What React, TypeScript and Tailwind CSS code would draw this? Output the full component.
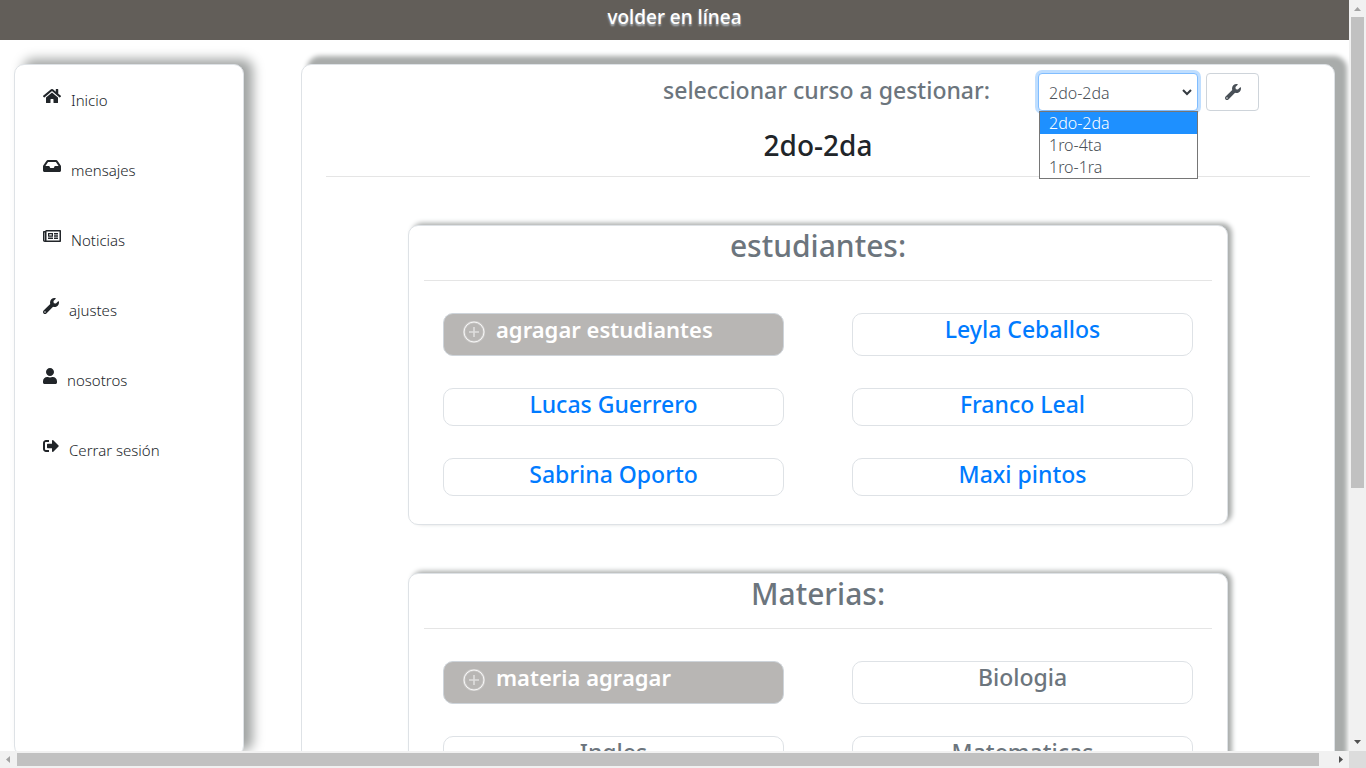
import React, { useState } from "react";
import { FaHome, FaInbox, FaRegNewspaper, FaSignOutAlt, FaUser, FaWrench } from "react-icons/fa";

const cursos = ["2do-2da", "1ro-4ta", "1ro-1ra"];

const menu = [
  { texto: "Inicio", icono: <FaHome className="h-4 w-[18px]" /> },
  { texto: "mensajes", icono: <FaInbox className="h-4 w-[18px]" /> },
  { texto: "Noticias", icono: <FaRegNewspaper className="h-4 w-[18px]" /> },
  { texto: "ajustes", icono: <FaWrench className="h-4 w-4" /> },
  { texto: "nosotros", icono: <FaUser className="h-4 w-3.5" /> },
  { texto: "Cerrar sesión", icono: <FaSignOutAlt className="h-4 w-4" /> },
];

function PlusCircle() {
  return (
    <svg className="h-[22px] w-[22px] shrink-0" viewBox="0 0 22 22" fill="none" stroke="#fff" aria-hidden="true">
      <circle cx="11" cy="11" r="10" strokeWidth="2.6" opacity="0.25" />
      <circle cx="11" cy="11" r="10" strokeWidth="1" opacity="0.85" />
      <path d="M11 6v10M6 11h10" strokeWidth="1.6" opacity="0.55" />
    </svg>
  );
}

function Tarjeta({ titulo, agregar, items, enlaces }: { titulo: string; agregar: string; items: string[]; enlaces?: boolean }) {
  return (
    <section className="mx-auto mt-12 w-10/12 rounded-[10px] border border-[#dee2e6] bg-white px-[15px] pb-7 shadow-[4px_-2px_5px_#a9acab]">
      <h2 className="pt-0.5 text-center text-[30px] leading-9 font-medium text-[#6c757d]">{titulo}</h2>
      <hr className="mt-4 border-black/10" />
      <div className="mt-8 grid grid-cols-2 gap-x-[68px] gap-y-8 px-[19px] text-[23px] leading-7 font-medium">
        <button type="button" className="flex items-start rounded-[10px] border border-[#ced4da] bg-[#b8b6b4] px-[19px] pt-px pb-3 text-[22px] font-semibold text-white">
          <span className="flex h-7 items-center gap-[11px]">
            <span className="pt-1.5"><PlusCircle /></span>
            {agregar}
          </span>
        </button>
        {items.map((item) => (
          <div key={item} className="rounded-[10px] border border-[#dee2e6] pt-px pb-[7px] text-center text-[#6c757d]">
            {enlaces ? <a href="#" className="text-[#007bff]">{item}</a> : item}
          </div>
        ))}
      </div>
    </section>
  );
}

function Flecha({ d, color }: { d: string; color: string }) {
  return (
    <svg className="h-[17px] w-[17px] shrink-0" viewBox="0 0 17 17" fill={color} aria-hidden="true">
      <path d={d} />
    </svg>
  );
}

export default function App() {
  const [curso, setCurso] = useState(cursos[0]);
  return (
    <div className="grid h-screen grid-cols-[minmax(0,1fr)_17px] grid-rows-[minmax(0,1fr)_17px] bg-white font-['Noto_Sans','Open_Sans',sans-serif] text-[#212529]">
      <div className="overflow-hidden">
        <header className="h-10 bg-[#625e59] text-center">
          <h1 className="text-[19px] leading-[34px] font-medium text-white [text-shadow:0_2px_2px_#b5bdc4]">volder en línea</h1>
        </header>

        <div className="mt-6 flex items-start px-3.5">
          <nav className="h-[692px] w-[230px] shrink-0 rounded-[10px] border border-[#dee2e6] bg-white px-7 pt-[23px] shadow-[9px_-5px_12px_#a1a4a3]">
            <ul className="flex flex-col gap-[46px]">
              {menu.map(({ texto, icono }) => (
                <li key={texto}>
                  <a href="#" className="flex items-start gap-2.5">
                    {icono}
                    <span className="text-[15px] leading-6 font-light">{texto}</span>
                  </a>
                </li>
              ))}
            </ul>
          </nav>

          <main className="ml-[57px] flex-1 rounded-[10px] border border-[#dee2e6] bg-white px-6 pt-2 pb-12 shadow-[9px_-5px_5px_3px_#a9acab]">
            <div className="flex justify-end pr-[51px]">
              <label htmlFor="curso" className="mr-12 text-[23px] leading-[34px] font-medium text-[#6c757d]">
                seleccionar curso a gestionar:
              </label>
              <div className="relative mr-2 w-40">
                <select
                  id="curso"
                  value={curso}
                  onChange={(e) => setCurso(e.target.value)}
                  className="h-[38px] w-full appearance-none rounded border border-[#80bdff] bg-white pt-0.5 pl-2.5 text-base font-light text-[#495057] shadow-[0_0_0_3px_#bfdeff] outline-none"
                >
                  {cursos.map((c) => (
                    <option key={c}>{c}</option>
                  ))}
                </select>
                <svg className="pointer-events-none absolute top-4 right-1.5 h-2 w-2.5" viewBox="0 0 10 8" fill="none" stroke="#343a40" strokeWidth="2" aria-hidden="true">
                  <path d="M1 1l4 4 4-4" />
                </svg>
                <ul role="listbox" aria-label="cursos" className="absolute top-[38px] right-0 left-px z-10 border border-[#767676] bg-white text-base leading-[22px] font-light text-[#495057]">
                  {cursos.map((c) => (
                    <li
                      key={c}
                      role="option"
                      aria-selected={c === curso}
                      onClick={() => setCurso(c)}
                      className={c === curso ? "bg-[#1e90ff] pl-[9px] text-white" : "pl-[9px]"}
                    >
                      {c}
                    </li>
                  ))}
                </ul>
              </div>
              <button type="button" aria-label="gestionar" className="flex h-[38px] w-[53px] items-center justify-center rounded border border-[#ced4da] text-[#495057]">
                <FaWrench className="h-4 w-4" />
              </button>
            </div>
            <h2 className="mt-[17px] mb-3.5 text-center text-[28px] leading-[34px] font-medium">{curso}</h2>
            <hr className="border-black/10" />

            <Tarjeta
              titulo="estudiantes:"
              agregar="agragar estudiantes"
              enlaces
              items={["Leyla Ceballos", "Lucas Guerrero", "Franco Leal", "Sabrina Oporto", "Maxi pintos"]}
            />
            <Tarjeta titulo="Materias:" agregar="materia agragar" items={["Biologia", "Ingles", "Matematicas"]} />
          </main>
        </div>
      </div>

      <div className="flex flex-col bg-[#f1f1f1]">
        <Flecha d="M5 11h7L8.500 7z" color="#a3a3a3" />
        <div className="flex-1">
          <div className="mx-auto h-[471px] w-[13px] bg-[#c1c1c1]" />
        </div>
        <Flecha d="M5 6h7L8.500 10z" color="#505050" />
      </div>
      <div className="flex items-center bg-[#f1f1f1]">
        <Flecha d="M10 5v7L6 8.500z" color="#a3a3a3" />
        <div className="flex-1">
          <div className="h-[13px] w-[99%] bg-[#c1c1c1]" />
        </div>
        <Flecha d="M7 5v7l4-3.500z" color="#505050" />
      </div>
      <div className="bg-[#dcdcdc]" />
    </div>
  );
}
